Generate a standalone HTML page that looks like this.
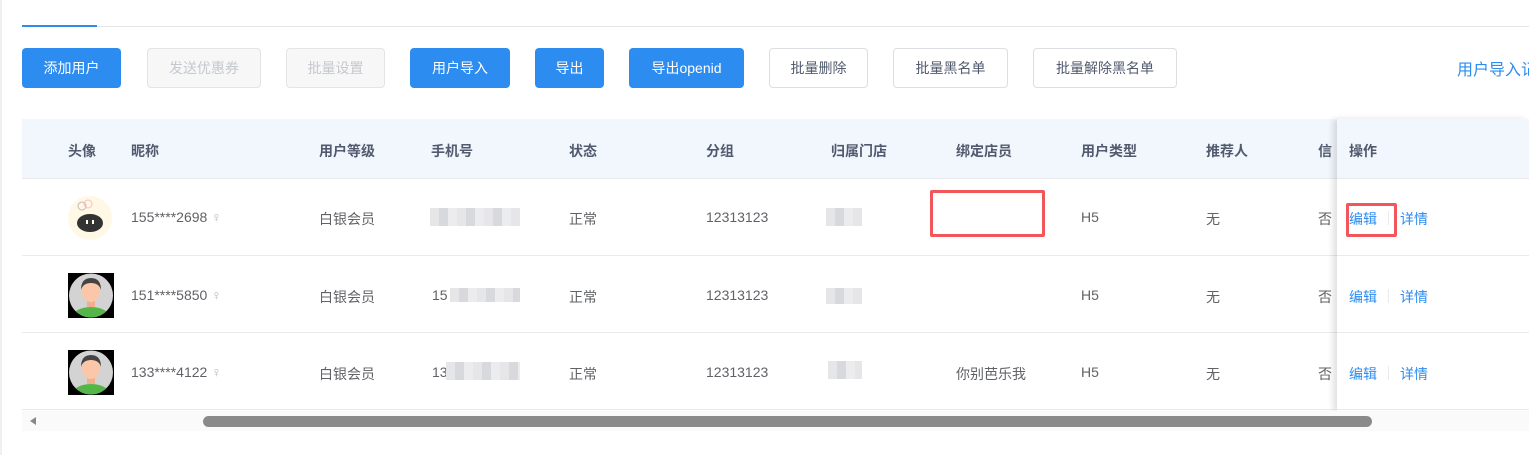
<!DOCTYPE html>
<html><head><meta charset="utf-8"><style>
*{margin:0;padding:0;box-sizing:border-box}
body{width:1529px;height:455px;background:#fff;position:relative;overflow:hidden;font-family:"Liberation Sans","Noto Sans CJK SC",sans-serif;font-size:14px;color:#606266}
.a{position:absolute;white-space:nowrap}
.btn{position:absolute;top:48px;height:40px;border-radius:4px;font-size:14px;line-height:40px;text-align:center}
.p{background:#2d8cf0;color:#fff}
.d{background:#f7f7f7;border:1px solid #e4e4e4;color:#c5c8ce;line-height:38px}
.w{background:#fff;border:1px solid #dcdee2;color:#515a6e;line-height:38px}
.h{font-weight:bold;color:#515a6e;top:141px}
.line{position:absolute;left:22px;width:1315px;height:1px;background:#e8eaec}
.blur{position:absolute;background:repeating-linear-gradient(90deg,#e6e6e8 0 9px,#d8d9dc 9px 18px,#ececee 18px 27px)}
.lk{color:#2d8cf0}
.g{color:#b8b8b8}
</style></head><body>
<div class="a" style="left:0;top:0;width:2px;height:455px;background:#f0f0f0"></div>
<div class="a" style="left:22px;top:26px;width:1507px;height:1px;background:#e4e6ea"></div>
<div class="a" style="left:22px;top:25px;width:75px;height:2px;background:#2d8cf0"></div>

<div class="btn p" style="left:22px;width:99px">添加用户</div>
<div class="btn d" style="left:147px;width:114px">发送优惠券</div>
<div class="btn d" style="left:286px;width:99px">批量设置</div>
<div class="btn p" style="left:410px;width:100px">用户导入</div>
<div class="btn p" style="left:535px;width:69px">导出</div>
<div class="btn p" style="left:629px;width:115px">导出openid</div>
<div class="btn w" style="left:769px;width:99px">批量删除</div>
<div class="btn w" style="left:893px;width:115px">批量黑名单</div>
<div class="btn w" style="left:1033px;width:144px">批量解除黑名单</div>
<div class="a" style="left:1457px;top:56px;font-size:16px;color:#2d8cf0">用户导入记录</div>

<div class="a" style="left:22px;top:119px;width:1507px;height:59px;background:#f2f7fd"></div>
<div class="line" style="top:178px"></div>
<div class="line" style="top:255px"></div>
<div class="line" style="top:332px"></div>
<div class="line" style="top:409px"></div>

<div class="a h" style="left:68px">头像</div>
<div class="a h" style="left:131px">昵称</div>
<div class="a h" style="left:319px">用户等级</div>
<div class="a h" style="left:431px">手机号</div>
<div class="a h" style="left:569px">状态</div>
<div class="a h" style="left:706px">分组</div>
<div class="a h" style="left:831px">归属门店</div>
<div class="a h" style="left:956px">绑定店员</div>
<div class="a h" style="left:1081px">用户类型</div>
<div class="a h" style="left:1206px">推荐人</div>
<div class="a h" style="left:1318px">信</div>

<!-- row1 -->
<svg class="a" style="left:68px;top:196px" width="45" height="45" viewBox="0 0 45 45"><circle cx="22" cy="22" r="22" fill="#fff8e6"/><circle cx="14" cy="10" r="4" fill="none" stroke="#bbb"/><circle cx="20" cy="8" r="4" fill="none" stroke="#fbb"/><ellipse cx="22" cy="27" rx="13" ry="9" fill="#333"/><rect x="18" y="24" width="2" height="4" fill="#ffe"/><rect x="24" y="24" width="2" height="4" fill="#ffe"/></svg>
<div class="a" style="left:131px;top:209px">155****2698 <span class="g">♀</span></div>
<div class="a" style="left:319px;top:209px">白银会员</div>
<div class="blur" style="left:430px;top:208px;width:90px;height:18px"></div>
<div class="a" style="left:569px;top:209px">正常</div>
<div class="a" style="left:706px;top:209px">12313123</div>
<div class="blur" style="left:826px;top:208px;width:36px;height:18px"></div>
<div class="a" style="left:930px;top:190px;width:115px;height:47px;border:3px solid #f0565a;border-radius:2px"></div>
<div class="a" style="left:1081px;top:209px">H5</div>
<div class="a" style="left:1206px;top:209px">无</div>
<!-- row2 -->
<svg class="a" style="left:68px;top:273px" width="46" height="45" viewBox="0 0 46 45"><rect width="46" height="45" fill="#000"/><circle cx="23" cy="22.5" r="22" fill="#d3d3d3"/><clipPath id="c1"><circle cx="23" cy="22.5" r="22"/></clipPath><g clip-path="url(#c1)"><ellipse cx="23" cy="46" rx="20" ry="12" fill="#56b548"/><rect x="19" y="26" width="8" height="8" fill="#f0b090"/><ellipse cx="23" cy="18" rx="9" ry="11" fill="#fcc6a8"/><path d="M13 17 Q13 5 23 5 Q33 5 33 17 Q31 10 23 10 Q15 10 13 17Z" fill="#444"/></g></svg>
<div class="a" style="left:131px;top:287px">151****5850 <span class="g">♀</span></div>
<div class="a" style="left:319px;top:287px">白银会员</div>
<div class="a" style="left:432px;top:287px">15</div><div class="blur" style="left:450px;top:288px;width:70px;height:14px"></div>
<div class="a" style="left:569px;top:287px">正常</div>
<div class="a" style="left:706px;top:287px">12313123</div>
<div class="blur" style="left:826px;top:288px;width:36px;height:16px"></div>
<div class="a" style="left:1081px;top:287px">H5</div>
<div class="a" style="left:1206px;top:287px">无</div>
<!-- row3 -->
<svg class="a" style="left:68px;top:350px" width="46" height="45" viewBox="0 0 46 45"><rect width="46" height="45" fill="#000"/><circle cx="23" cy="22.5" r="22" fill="#d3d3d3"/><clipPath id="c2"><circle cx="23" cy="22.5" r="22"/></clipPath><g clip-path="url(#c2)"><ellipse cx="23" cy="46" rx="20" ry="12" fill="#56b548"/><rect x="19" y="26" width="8" height="8" fill="#f0b090"/><ellipse cx="23" cy="18" rx="9" ry="11" fill="#fcc6a8"/><path d="M13 17 Q13 5 23 5 Q33 5 33 17 Q31 10 23 10 Q15 10 13 17Z" fill="#444"/></g></svg>
<div class="a" style="left:131px;top:364px">133****4122 <span class="g">♀</span></div>
<div class="a" style="left:319px;top:364px">白银会员</div>
<div class="a" style="left:432px;top:364px">13</div><div class="blur" style="left:446px;top:362px;width:74px;height:18px"></div>
<div class="a" style="left:569px;top:364px">正常</div>
<div class="a" style="left:706px;top:364px">12313123</div>
<div class="blur" style="left:828px;top:361px;width:34px;height:18px"></div>
<div class="a" style="left:956px;top:364px">你别芭乐我</div>
<div class="a" style="left:1081px;top:364px">H5</div>
<div class="a" style="left:1206px;top:364px">无</div>
<div class="a" style="left:1318px;top:209px">否</div>
<div class="a" style="left:1318px;top:287px">否</div>
<div class="a" style="left:1318px;top:364px">否</div>

<!-- fixed column -->
<div class="a" style="left:1337px;top:119px;width:192px;height:292px;background:#fff;box-shadow:-4px 0 6px rgba(0,0,0,0.12)"></div>
<div class="a" style="left:1337px;top:119px;width:192px;height:59px;background:#f2f7fd"></div>
<div class="a" style="left:1337px;top:178px;width:192px;height:1px;background:#e8eaec"></div>
<div class="a" style="left:1337px;top:255px;width:192px;height:1px;background:#e8eaec"></div>
<div class="a" style="left:1337px;top:332px;width:192px;height:1px;background:#e8eaec"></div>
<div class="a" style="left:1337px;top:409px;width:192px;height:1px;background:#e8eaec"></div>
<div class="a h" style="left:1349px">操作</div>
<div class="a lk" style="left:1349px;top:209px">编辑</div><div class="a" style="left:1388px;top:211px;width:1px;height:14px;background:#e8eaec"></div><div class="a lk" style="left:1400px;top:209px">详情</div>
<div class="a" style="left:1346px;top:203px;width:51px;height:34px;border:3px solid #f0565a;border-radius:2px"></div>
<div class="a lk" style="left:1349px;top:287px">编辑</div><div class="a" style="left:1388px;top:289px;width:1px;height:14px;background:#e8eaec"></div><div class="a lk" style="left:1400px;top:287px">详情</div>
<div class="a lk" style="left:1349px;top:364px">编辑</div><div class="a" style="left:1388px;top:366px;width:1px;height:14px;background:#e8eaec"></div><div class="a lk" style="left:1400px;top:364px">详情</div>

<!-- scrollbar -->
<div class="a" style="left:22px;top:411px;width:1507px;height:20px;background:#fafafa"></div>
<div class="a" style="left:30px;top:417px;width:0;height:0;border-top:4px solid transparent;border-bottom:4px solid transparent;border-right:6px solid #888"></div>
<div class="a" style="left:203px;top:416px;width:1169px;height:11px;border-radius:6px;background:#8a8a8a"></div>
</body></html>
